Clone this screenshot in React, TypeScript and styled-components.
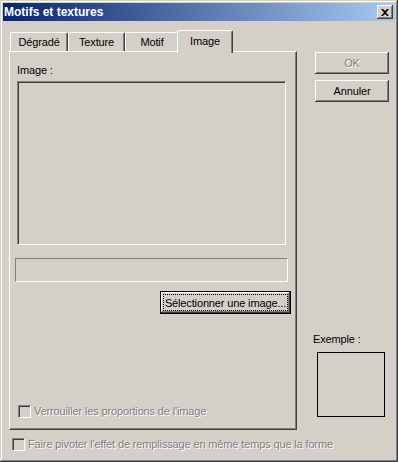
import styled, { createGlobalStyle } from 'styled-components';

const face = '#d4d0c8';
const shadow = '#808080';
const darkShadow = '#404040';

const GlobalStyle = createGlobalStyle`
  html, body {
    margin: 0;
    padding: 0;
    background: ${face};
  }
  body {
    font-family: 'Liberation Sans', Arial, sans-serif;
    font-size: 11px;
    letter-spacing: -0.14px;
    color: #000;
  }
`;

const tabs = [
  { label: 'Dégradé', width: 58 },
  { label: 'Texture', width: 57 },
  { label: 'Motif', width: 54 },
  { label: 'Image', width: 52 },
];
const activeTab = 'Image';

export default function App() {
  return (
    <>
      <GlobalStyle />
      <Window>
        <TitleBar>
          <TitleText>Motifs et textures</TitleText>
          <CloseButton>
            <svg width="8" height="7" viewBox="0 0 8 7">
              <path d="M0 0h2l2 2 2-2h2L5 3.5 8 7H6L4 5 2 7H0l3-3.5z" fill="#000" />
            </svg>
          </CloseButton>
        </TitleBar>

        <Content>
          <MainRow>
            <LeftCol>
              <TabStrip>
                {tabs.map((t) => (
                  <Tab key={t.label} $width={t.width} $active={t.label === activeTab}>
                    {t.label}
                  </Tab>
                ))}
              </TabStrip>
              <Panel>
                <FieldLabel>Image :</FieldLabel>
                <ImageBox />
                <PathField />
                <SelectButton>
                  <FocusRing>Sélectionner une image...</FocusRing>
                </SelectButton>
                <CheckRow $left={3} $top={91}>
                  <CheckBox />
                  <DisabledText>Verrouiller les proportions de l'image</DisabledText>
                </CheckRow>
              </Panel>
            </LeftCol>

            <RightCol>
              <PushButton $disabled>OK</PushButton>
              <PushButton>Annuler</PushButton>
              <ExampleLabel>Exemple :</ExampleLabel>
              <ExampleBox />
            </RightCol>
          </MainRow>

          <CheckRow $left={3} $top={8}>
            <CheckBox />
            <DisabledText>Faire pivoter l'effet de remplissage en même temps que la forme</DisabledText>
          </CheckRow>
        </Content>
      </Window>
    </>
  );
}

const Window = styled.div`
  box-sizing: border-box;
  width: 398px;
  height: 462px;
  padding: 3px;
  background: ${face};
  box-shadow: inset -1px -1px ${darkShadow}, inset 1px 1px ${face}, inset -2px -2px ${shadow},
    inset 2px 2px #fff;
  display: flex;
  flex-direction: column;
`;

const TitleBar = styled.div`
  height: 18px;
  display: flex;
  align-items: center;
  justify-content: space-between;
  padding: 0 2px 0 1px;
  background: linear-gradient(to right, #0a246a, #a6caf0);
`;

const TitleText = styled.span`
  color: #fff;
  font-weight: bold;
  font-size: 12px;
  letter-spacing: 0;
  white-space: nowrap;
`;

const CloseButton = styled.div`
  box-sizing: border-box;
  width: 16px;
  height: 14px;
  background: ${face};
  display: flex;
  align-items: center;
  justify-content: center;
  box-shadow: inset -1px -1px ${darkShadow}, inset 1px 1px #fff, inset -2px -2px ${shadow},
    inset 2px 2px ${face};
`;

const Content = styled.div`
  flex: 1;
  padding: 9px 0 0 6px;
  display: flex;
  flex-direction: column;
`;

const MainRow = styled.div`
  display: flex;
`;

const LeftCol = styled.div`
  width: 288px;
  display: flex;
  flex-direction: column;
`;

const TabStrip = styled.div`
  height: 21px;
  display: flex;
  align-items: flex-end;
  padding-left: 1px;
`;

const Tab = styled.div<{ $width: number; $active?: boolean }>`
  box-sizing: border-box;
  position: relative;
  width: ${(p) => p.$width + (p.$active ? 4 : 0)}px;
  height: ${(p) => (p.$active ? 23 : 19)}px;
  margin: 0 ${(p) => (p.$active ? -2 : 0)}px ${(p) => (p.$active ? -2 : 0)}px;
  z-index: ${(p) => (p.$active ? 2 : 1)};
  background: ${face};
  border-top: 1px solid #fff;
  border-left: 1px solid #fff;
  border-right: 1px solid ${darkShadow};
  border-radius: 2px 2px 0 0;
  box-shadow: inset -1px 0 ${shadow};
  display: flex;
  justify-content: center;
  padding-top: ${(p) => (p.$active ? 4 : 3)}px;
  line-height: 13px;
  white-space: nowrap;
`;

const Panel = styled.div`
  box-sizing: border-box;
  height: 379px;
  background: ${face};
  border-top: 1px solid #fff;
  border-left: 1px solid #fff;
  border-right: 1px solid ${darkShadow};
  border-bottom: 1px solid ${darkShadow};
  box-shadow: inset -1px -1px ${shadow};
  padding: 0 5px 0 5px;
  display: flex;
  flex-direction: column;
`;

const FieldLabel = styled.div`
  margin: 12px 0 0 2px;
  line-height: 13px;
`;

const ImageBox = styled.div`
  box-sizing: border-box;
  width: 269px;
  height: 164px;
  margin: 4px 0 0 2px;
  border-top: 1px solid ${shadow};
  border-left: 1px solid ${shadow};
  border-right: 1px solid #fff;
  border-bottom: 1px solid #fff;
  box-shadow: inset 1px 1px ${darkShadow}, inset -1px -1px ${face};
`;

const PathField = styled.div`
  box-sizing: border-box;
  width: 273px;
  height: 24px;
  margin-top: 13px;
  border-top: 1px solid ${shadow};
  border-left: 1px solid ${shadow};
  border-right: 1px solid #fff;
  border-bottom: 1px solid #fff;
`;

const SelectButton = styled.div`
  box-sizing: border-box;
  align-self: flex-end;
  width: 131px;
  height: 23px;
  margin-top: 9px;
  border: 1px solid #000;
  box-shadow: inset -1px -1px ${darkShadow}, inset 1px 1px #fff, inset -2px -2px ${shadow};
  padding: 2px;
  display: flex;
`;

const FocusRing = styled.div`
  flex: 1;
  border: 1px dotted #000;
  display: flex;
  align-items: center;
  justify-content: center;
  white-space: nowrap;
`;

const CheckRow = styled.div<{ $left: number; $top: number }>`
  display: flex;
  align-items: center;
  gap: 3px;
  margin: ${(p) => p.$top}px 0 0 ${(p) => p.$left}px;
  height: 13px;
  white-space: nowrap;
`;

const CheckBox = styled.div`
  box-sizing: border-box;
  flex: none;
  width: 13px;
  height: 13px;
  background: ${face};
  border-top: 1px solid ${shadow};
  border-left: 1px solid ${shadow};
  border-right: 1px solid #fff;
  border-bottom: 1px solid #fff;
  box-shadow: inset 1px 1px ${darkShadow}, inset -1px -1px ${face};
`;

const DisabledText = styled.span`
  color: ${shadow};
  text-shadow: 1px 1px #fff;
  line-height: 13px;
`;

const RightCol = styled.div`
  margin-left: 18px;
  display: flex;
  flex-direction: column;
`;

const PushButton = styled.div<{ $disabled?: boolean }>`
  box-sizing: border-box;
  width: 74px;
  height: 22px;
  margin-top: ${(p) => (p.$disabled ? 22 : 6)}px;
  display: flex;
  align-items: center;
  justify-content: center;
  color: ${(p) => (p.$disabled ? shadow : '#000')};
  text-shadow: ${(p) => (p.$disabled ? '1px 1px #fff' : 'none')};
  box-shadow: inset -1px -1px ${darkShadow}, inset 1px 1px #fff, inset -2px -2px ${shadow},
    inset 2px 2px ${face};
`;

const ExampleLabel = styled.div`
  margin: 231px 0 0 -2px;
  line-height: 13px;
`;

const ExampleBox = styled.div`
  box-sizing: border-box;
  width: 68px;
  height: 65px;
  margin: 6px 0 0 2px;
  border: 1px solid #000;
`;
